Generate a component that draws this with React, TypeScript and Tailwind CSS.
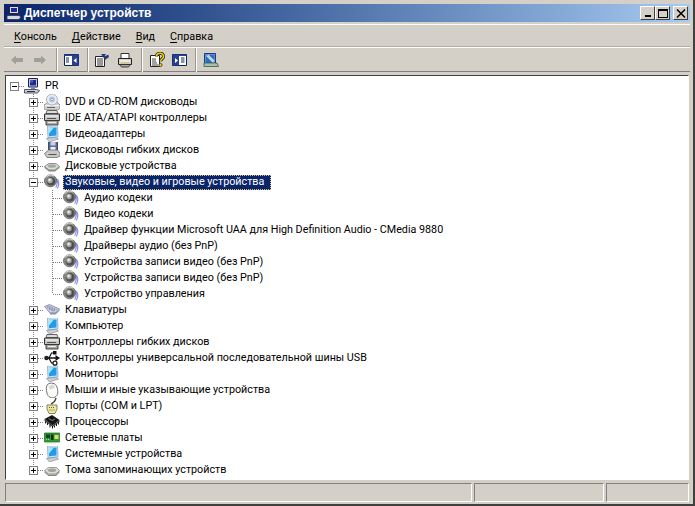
import React from 'react';

type IconName =
  | 'computer' | 'cdrom' | 'ide' | 'display' | 'floppy' | 'disk' | 'sound' | 'keyboard'
  | 'usb' | 'mouse' | 'port' | 'cpu' | 'net' | 'volume';

function DeviceIcon({ name }: { name: IconName }) {
  const body: Record<IconName, React.ReactNode> = {
    computer: (
      <>
        <path d="M4.500 .5h9v8.500h-9z" fill="#c4c8d8" stroke="#20204a" />
        <path d="M6 2h6v5.500H6z" fill="#1c2c90" />
        <path d="M6 2h3v2.500H6z" fill="#4c5cd0" />
        <path d="M7 9h4v2H7z" fill="#8088a0" />
        <path d="M.5 11.500h12l3 1-2 2.500H.5z" fill="#c8ccd8" stroke="#303050" strokeWidth=".8" />
        <path d="M3 13.500h8" stroke="#303050" />
      </>
    ),
    cdrom: (
      <>
        <path d="M0 11l4-3h9l3 3v3.500L14 16H1l-1-1.500z" fill="#d0d0cc" stroke="#84847e" strokeWidth=".8" />
        <path d="M1 11.500h14" stroke="#f4f4f0" />
        <circle cx="8" cy="5.500" r="5.500" fill="#e6ecf4" stroke="#a0a6b0" strokeWidth=".8" />
        <circle cx="8" cy="5.500" r="3" fill="#b8c8ec" />
        <circle cx="8" cy="5.500" r="1.200" fill="#fff" stroke="#707886" strokeWidth=".6" />
        <path d="M3 13.500h8" stroke="#666" />
      </>
    ),
    ide: (
      <>
        <path d="M3 .5h10l1 3H2z" fill="#dcdcdc" stroke="#555" strokeWidth=".9" />
        <path d="M.5 4h15v6.500H.5z" fill="#c4c4c0" stroke="#333" />
        <path d="M2 6h12" stroke="#fff" />
        <path d="M3 8.500h9" stroke="#555" />
        <path d="M2 10.500h12v4.500H2z" fill="#a8a8a4" stroke="#333" strokeWidth=".9" />
        <path d="M4 12.500h8" stroke="#eee" />
      </>
    ),
    display: (
      <>
        <path d="M3.500 0l10-.5.5 11.500-10 1z" fill="#cfe6f6" stroke="#7f9ab0" strokeWidth=".7" />
        <path d="M5 1.800l7.500-.3v8l-7.500.7z" fill="#1f9cec" />
        <path d="M5 1.800l5-.2-5 6z" fill="#9fe6ff" />
        <path d="M2.500 12.500l9-1.200 3 1.700-9 3z" fill="#c9cfda" stroke="#7b8492" strokeWidth=".6" />
      </>
    ),
    floppy: (
      <>
        <path d="M4.500 0h9v8h-9z" fill="#5c6c9c" stroke="#323c60" strokeWidth=".9" />
        <path d="M6.500 0h5v3.500h-5z" fill="#c8d0e4" />
        <path d="M6.500 5h5v3h-5z" fill="#f0f2f8" />
        <path d="M.5 11.500l4-3.500h9l2.500 3v3l-3 1.500H3z" fill="#c8c8c6" stroke="#70706c" strokeWidth=".8" />
        <path d="M4.500 12.500h8" stroke="#555" />
      </>
    ),
    disk: (
      <>
        <path d="M.5 8.500l4.500-3h7l3.500 3-4.500 3.500H5z" fill="#dcdcd8" stroke="#7a7a76" strokeWidth=".8" />
        <ellipse cx="8" cy="8" rx="4.200" ry="1.800" fill="#a8aaa6" />
        <path d="M.5 8.500L5 12h6l4.500-3.500V10L11 13.500H5L.5 10z" fill="#868884" />
        <path d="M11.500 12l2.500-2" stroke="#5ec050" />
      </>
    ),
    sound: (
      <>
        <path d="M11.500 3.500c2.200 3 2.500 6.500 .2 10M13.500 5c1.800 3 1.800 6-.3 9.500" fill="none" stroke="#8f8fe8" strokeWidth="1.200" />
        <circle cx="6.500" cy="6.800" r="6" fill="#8c8c88" stroke="#5a5a58" strokeWidth=".8" />
        <circle cx="7" cy="7.300" r="4.300" fill="#4e4e4c" />
        <circle cx="6" cy="6.500" r="2.700" fill="#a8a8a4" />
        <circle cx="5.600" cy="6" r="1.200" fill="#f0f0ec" />
        <path d="M1.500 4a6 6 0 0 1 8.500-2" fill="none" stroke="#e4e4e0" />
      </>
    ),
    keyboard: (
      <>
        <path d="M.5 4.500l5-2 10 4.500-4 4H6z" fill="#c6cbe0" stroke="#7d84a4" strokeWidth=".8" />
        <path d="M3 5l8 3.500M4.500 4.300l8 3.500M5 6.800l5 2.200" stroke="#666a92" strokeDasharray="1 1" />
        <path d="M6 11l5.500-.2 4-3.300v1.200L11.500 12.500H6z" fill="#8a90ac" />
      </>
    ),
    usb: (
      <>
        <path d="M3 8h11" stroke="#111" strokeWidth="1.500" />
        <path d="M11.500 5L16 8l-4.500 3z" fill="#111" />
        <circle cx="2.500" cy="8" r="2.300" fill="#222" />
        <path d="M5 8l2.500-5H10" fill="none" stroke="#111" strokeWidth="1.200" />
        <path d="M9 1h3.500v3.500H9z" fill="#111" />
        <path d="M5 8l2.500 5H10" fill="none" stroke="#111" strokeWidth="1.200" />
        <circle cx="11" cy="13.200" r="2" fill="#fff" stroke="#111" strokeWidth="1.200" />
      </>
    ),
    mouse: (
      <>
        <path d="M3.500 2.500C7 0 11.500 1 13 5c1.500 4.500 1 8.500-2 10.200-3.300 1.500-7 0-8-4-1-3.500-1-6.700.5-8.700z" fill="#fbfbf6" stroke="#6e7072" />
        <path d="M4.500 4.500l4.500-2 2 3-4.500 2z" fill="#d8d8d2" />
      </>
    ),
    port: (
      <>
        <path d="M12 -1c0 4-2 5.500-5 7" fill="none" stroke="#444" strokeWidth="1.400" />
        <path d="M3 7h10v4l-2 4.500H5L3 11z" fill="#eee7a2" stroke="#7b7a48" strokeWidth=".9" />
        <path d="M5 9.500h6M5.500 12h5" stroke="#66653c" strokeDasharray="1 1" />
      </>
    ),
    cpu: (
      <>
        <path d="M.5 5l7.500-4L15.500 6l-7 5.500z" fill="#141414" />
        <path d="M.5 5v2l8 6 7-5V6l-7 5.500z" fill="#3c3c3c" />
        <path d="M1.500 7.500v2M3.500 9v2M6 10.500v3M8.500 12v2.500M10.500 11.500v2M12.500 10v2M14.500 8.500v2" stroke="#111" />
        <path d="M4.500 4.500l3.500 2 3-1.500" stroke="#808080" fill="none" />
      </>
    ),
    net: (
      <>
        <path d="M.5 3H15.500V12H.5z" fill="#2f9a38" stroke="#176a20" strokeWidth=".7" />
        <path d="M2 4.500h4V8H2z" fill="#16441a" />
        <path d="M7 4.500h2.500v5.500H7z" fill="#0c3212" />
        <path d="M10.500 5h4v4h-4z" fill="#e4d860" />
        <path d="M2 9.500h4M3 13h9" stroke="#b8d48c" strokeDasharray="1 1" />
      </>
    ),
    volume: (
      <>
        <path d="M.5 8.500l4-3h8l3 3-3.500 3.500H4.500z" fill="#dcdcd8" stroke="#84867f" strokeWidth=".8" />
        <ellipse cx="8" cy="8.300" rx="4.200" ry="1.800" fill="#a2a49e" />
        <path d="M.5 9L4.500 12.500h7.500L15.500 9v1.500L12 14H4.500L.5 10.500z" fill="#868882" />
        <path d="M11.500 12l2-1.500" stroke="#62c454" />
      </>
    ),
  };
  return (
    <svg width="16" height="16" viewBox="0 0 16 16" className="shrink-0">
      {body[name]}
    </svg>
  );
}

// dotted tree lines and the +/- box, drawn for one 16px row
function Gutter({ level, expander, last }: { level: 0 | 1 | 2; expander?: '+' | '-'; last?: boolean }) {
  const dots = { stroke: '#808080', strokeDasharray: '1 1' };
  if (level === 0) {
    return (
      <svg width="18" height="16" className="shrink-0">
        <path d="M13 8.500h5" {...dots} />
        <rect x="4.500" y="4.500" width="8" height="8" fill="#fff" stroke="#808080" />
        <path d="M6 8.500h5" stroke="#000" />
      </svg>
    );
  }
  if (level === 1) {
    return (
      <svg width="38" height="16" className="shrink-0">
        <path d={last ? 'M27.500 0v4' : 'M27.500 0v16'} {...dots} />
        <path d="M32 8.500h6" {...dots} />
        <rect x="23.500" y="4.500" width="8" height="8" fill="#fff" stroke="#808080" />
        <path d="M25 8.500h5" stroke="#000" />
        {expander === '+' && <path d="M27.500 6v5" stroke="#000" />}
      </svg>
    );
  }
  return (
    <svg width="57" height="16" className="shrink-0">
      <path d="M27.500 0v16" {...dots} />
      <path d={last ? 'M46.500 0v8' : 'M46.500 0v16'} {...dots} />
      <path d="M47 8.500h10" {...dots} />
    </svg>
  );
}

const topGroups: { label: string; icon: IconName }[] = [
  { label: 'DVD и CD-ROM дисководы', icon: 'cdrom' },
  { label: 'IDE ATA/ATAPI контроллеры', icon: 'ide' },
  { label: 'Видеоадаптеры', icon: 'display' },
  { label: 'Дисководы гибких дисков', icon: 'floppy' },
  { label: 'Дисковые устройства', icon: 'disk' },
];

const soundDevices = [
  'Аудио кодеки',
  'Видео кодеки',
  'Драйвер функции Microsoft UAA для High Definition Audio - CMedia 9880',
  'Драйверы аудио (без PnP)',
  'Устройства записи видео (без PnP)',
  'Устройства записи видео (без PnP)',
  'Устройство управления',
];

const bottomGroups: { label: string; icon: IconName }[] = [
  { label: 'Клавиатуры', icon: 'keyboard' },
  { label: 'Компьютер', icon: 'display' },
  { label: 'Контроллеры гибких дисков', icon: 'ide' },
  { label: 'Контроллеры универсальной последовательной шины USB', icon: 'usb' },
  { label: 'Мониторы', icon: 'display' },
  { label: 'Мыши и иные указывающие устройства', icon: 'mouse' },
  { label: 'Порты (COM и LPT)', icon: 'port' },
  { label: 'Процессоры', icon: 'cpu' },
  { label: 'Сетевые платы', icon: 'net' },
  { label: 'Системные устройства', icon: 'display' },
  { label: 'Тома запоминающих устройств', icon: 'volume' },
];

function Row({ children }: { children: React.ReactNode }) {
  return <div className="flex h-4 items-center whitespace-nowrap">{children}</div>;
}

function ToolIcon({ children, w = 16 }: { children: React.ReactNode; w?: number }) {
  return (
    <svg width={w} height="16" viewBox={`0 0 ${w} 16`} className="shrink-0">
      {children}
    </svg>
  );
}

const Separator = () => <div className="h-[24px] w-[2px] shrink-0 border-r border-l border-r-white border-l-[#9a9890]" />;

function Menu({ first, rest }: { first: string; rest: string }) {
  return (
    <span>
      <span className="underline underline-offset-2">{first}</span>
      {rest}
    </span>
  );
}

const captionButton =
  'flex h-[14px] w-[15px] border border-t-white border-l-white border-r-[#404040] border-b-[#404040] bg-[#d4d0c8]';

export default function App() {
  return (
    <div className="flex h-[506px] w-[695px] flex-col overflow-hidden border-r-2 border-b-2 border-r-[#404040] border-b-[#404040] bg-[#d4d0c8] pt-1 pr-[3px] pl-1 font-['Roboto',sans-serif] text-[10.75px] text-black">
      {/* Title bar */}
      <div className="flex h-[18px] shrink-0 items-center bg-gradient-to-r from-[#0a246a] to-[#a6caf0] pr-[2px]">
        <svg width="16" height="16" viewBox="0 0 16 16" className="ml-[2px] shrink-0">
          <path d="M3.500 1.500h9v7h-9z" fill="#dcdce4" stroke="#20204a" />
          <path d="M5 3h6v4H5z" fill="#1c2c90" />
          <path d="M1 10.500h12l2 1.500-2 2.500H1z" fill="#d4d6e0" stroke="#303050" strokeWidth=".8" />
        </svg>
        <span className="ml-[2px] font-['Liberation_Sans',sans-serif] text-[12px] font-bold text-white">Диспетчер устройств</span>
        <div className="ml-auto flex">
          <button className={`${captionButton} items-end justify-center pb-[2px]`}>
            <span className="h-[2px] w-[6px] bg-black" />
          </button>
          <button className={`${captionButton} items-center justify-center`}>
            <span className="h-[9px] w-[10px] border border-t-2 border-black" />
          </button>
          <button className={`${captionButton} ml-[3px] items-center justify-center`}>
            <svg width="10" height="9" viewBox="0 0 10 9">
              <path d="M1 .5l8 8M9 .5l-8 8" stroke="#000" strokeWidth="1.500" />
            </svg>
          </button>
        </div>
      </div>

      {/* Menu bar */}
      <div className="mt-[2px] flex h-[24px] shrink-0 items-center gap-[15px] border-t border-b border-t-white border-b-white pt-[2px] pl-[10px] shadow-[inset_0_-1px_0_#b0aca4]">
        <Menu first="К" rest="онсоль" />
        <Menu first="Д" rest="ействие" />
        <Menu first="В" rest="ид" />
        <Menu first="С" rest="правка" />
      </div>

      {/* Toolbar */}
      <div className="flex h-[24px] shrink-0 items-center border-b border-b-[#808080] pl-[6px]">
        <ToolIcon w={14}>
          <path d="M1 8l5-4.500V6h7v4H6v2.500z" fill="#a0a09a" />
        </ToolIcon>
        <div className="w-[9px]" />
        <ToolIcon w={14}>
          <path d="M13 8L8 3.500V6H1v4h7v2.500z" fill="#a0a09a" />
        </ToolIcon>
        <div className="w-[9px]" />
        <Separator />
        <div className="w-[6px]" />
        <ToolIcon w={15}>
          <path d="M.5 2.500h14v11H.5z" fill="#fff" stroke="#0a246a" />
          <path d="M.5 2.500h14V4H.5zM8 4h6.500v9.500H8z" fill="#2a3f90" />
          <path d="M2 6h3M2 8h3M2 10h3" stroke="#0a246a" />
          <path d="M12.500 6v5L9.500 8.500z" fill="#fff" />
        </ToolIcon>
        <div className="w-[8px]" />
        <Separator />
        <div className="w-[5px]" />
        <ToolIcon>
          <path d="M1.500 4.500h9v10h-9z" fill="#fff" stroke="#222" />
          <path d="M3 7h6M3 9h6M3 11h6M3 13h6" stroke="#333" />
          <path d="M7 2h7l1 3-4 3z" fill="#2c3c78" />
          <path d="M11 3.500l3-1.500" stroke="#fff" />
        </ToolIcon>
        <div className="w-[7px]" />
        <ToolIcon>
          <path d="M4 1.500h8v5H4z" fill="#fff" stroke="#333" />
          <path d="M1.500 6.500h13v6h-13z" fill="#d4d0c8" stroke="#222" />
          <path d="M3 9h10" stroke="#fff" />
          <path d="M2.500 12.500l2 2.500h7l2-2.500z" fill="#a8a8a0" stroke="#222" strokeWidth=".8" />
          <path d="M4 11h8" stroke="#c8c060" />
        </ToolIcon>
        <div className="w-[8px]" />
        <Separator />
        <div className="w-[6px]" />
        <ToolIcon>
          <path d="M1.500 3.500h9v11h-9z" fill="#fff" stroke="#222" />
          <path d="M3 7h4M3 9h4M3 11h5M3 13h6" stroke="#444" />
          <path d="M7.500 4.500C7.500 .5 14.500 0 14.500 4.500c0 2.500-3 2.500-3 5" fill="none" stroke="#222" strokeWidth="3" />
          <path d="M7.500 4.500C7.500 .5 14.500 0 14.500 4.500c0 2.500-3 2.500-3 5" fill="none" stroke="#f0d000" strokeWidth="1.600" />
          <circle cx="11.500" cy="13" r="1.600" fill="#f0d000" stroke="#222" strokeWidth=".7" />
        </ToolIcon>
        <div className="w-[7px]" />
        <ToolIcon w={15}>
          <path d="M.5 2.500h14v11H.5z" fill="#fff" stroke="#0a246a" />
          <path d="M.5 2.500h14V4H.5zM.5 4H7v9.500H.5z" fill="#2a3f90" />
          <path d="M9 6h3.500M9 8h3.500M9 10h3.500" stroke="#0a246a" />
          <path d="M3 6v5l3-2.500z" fill="#fff" />
        </ToolIcon>
        <div className="w-[8px]" />
        <Separator />
        <div className="w-[6px]" />
        <ToolIcon>
          <path d="M1.500 1.500h11v11h-11z" fill="#5c90d8" stroke="#1c3c78" />
          <path d="M3 3h8v8H3z" fill="#2470c8" />
          <path d="M3.500 3.500l7 7M5 3l6 6" stroke="#d8d8d8" strokeWidth="1.300" />
          <path d="M1 11h13l1.500 3.500H1z" fill="#a8c0a8" stroke="#3a5a50" strokeWidth=".8" />
        </ToolIcon>
      </div>

      {/* Device tree */}
      <div className="mx-px mt-[3px] flex-1 overflow-hidden border border-t-[#404040] border-r-white border-b-white border-l-[#404040] bg-white">
        <div className="pt-[2px]">
          <Row>
            <Gutter level={0} expander="-" />
            <DeviceIcon name="computer" />
            <span className="ml-[5px]">PR</span>
          </Row>
          {topGroups.map((group) => (
            <Row key={group.label}>
              <Gutter level={1} expander="+" />
              <DeviceIcon name={group.icon} />
              <span className="ml-[5px]">{group.label}</span>
            </Row>
          ))}
          <Row>
            <Gutter level={1} expander="-" />
            <DeviceIcon name="sound" />
            <span className="ml-[3px] flex h-[15px] w-[208px] items-center border border-dotted border-[#e0c070] bg-[#0a246a] pl-px text-white">
              Звуковые, видео и игровые устройства
            </span>
          </Row>
          {soundDevices.map((device, i) => (
            <Row key={i}>
              <Gutter level={2} last={i === soundDevices.length - 1} />
              <DeviceIcon name="sound" />
              <span className="ml-[5px]">{device}</span>
            </Row>
          ))}
          {bottomGroups.map((group, i) => (
            <Row key={group.label}>
              <Gutter level={1} expander="+" last={i === bottomGroups.length - 1} />
              <DeviceIcon name={group.icon} />
              <span className="ml-[5px]">{group.label}</span>
            </Row>
          ))}
        </div>
      </div>

      {/* Status bar */}
      <div className="mx-px mt-[3px] mb-[2px] flex h-[19px] shrink-0 gap-[2px]">
        <div className="w-[467px] border border-t-[#808080] border-r-white border-b-white border-l-[#808080]" />
        <div className="w-[130px] border border-t-[#808080] border-r-white border-b-white border-l-[#808080]" />
        <div className="flex-1 border border-t-[#808080] border-r-white border-b-white border-l-[#808080]" />
      </div>
    </div>
  );
}
